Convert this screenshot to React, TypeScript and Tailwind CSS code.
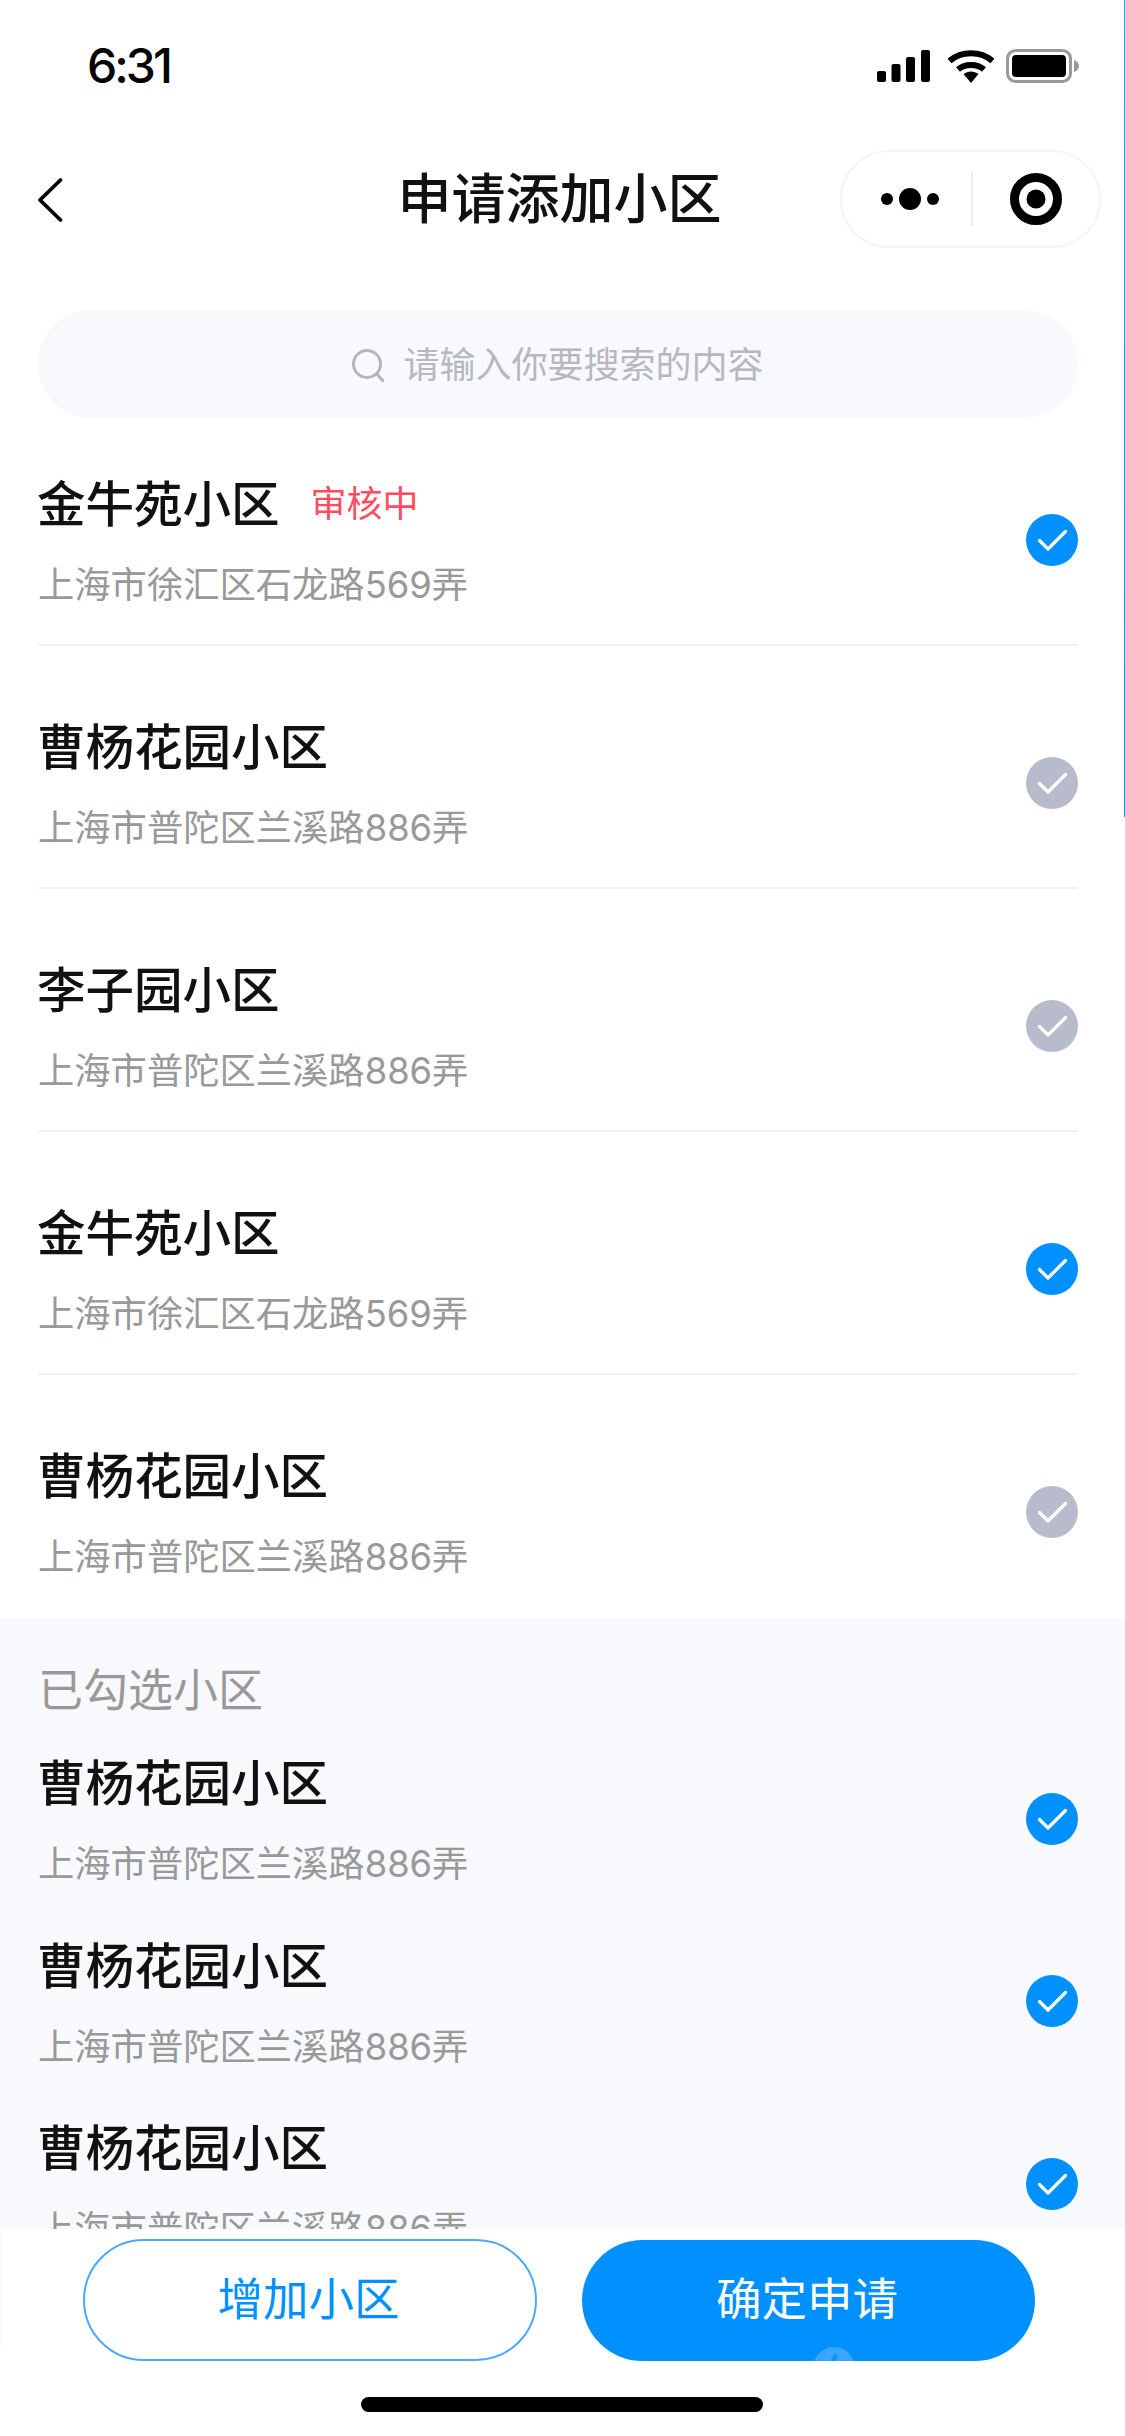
import React from "react";

const FONT = 'font-["Inter","Noto_Sans_CJK_SC",sans-serif]';

type Item = { name: string; addr: string; on: boolean; tag?: string };

const listItems: Item[] = [
  { name: "金牛苑小区", addr: "上海市徐汇区石龙路569弄", on: true, tag: "审核中" },
  { name: "曹杨花园小区", addr: "上海市普陀区兰溪路886弄", on: false },
  { name: "李子园小区", addr: "上海市普陀区兰溪路886弄", on: false },
  { name: "金牛苑小区", addr: "上海市徐汇区石龙路569弄", on: true },
  { name: "曹杨花园小区", addr: "上海市普陀区兰溪路886弄", on: false },
];

const selected: Item[] = [
  { name: "曹杨花园小区", addr: "上海市普陀区兰溪路886弄", on: true },
  { name: "曹杨花园小区", addr: "上海市普陀区兰溪路886弄", on: true },
  { name: "曹杨花园小区", addr: "上海市普陀区兰溪路886弄", on: true },
];

function Check({ on }: { on: boolean }) {
  return (
    <svg width="52" height="52" viewBox="0 0 52 52" className="shrink-0 -translate-y-[2px]">
      <circle cx="26" cy="26" r="26" fill={on ? "#0091ff" : "#b7bbcb"} />
      <path d="M13.5 26.5 L22 35 L39.5 17.5" fill="none" stroke="#fff" strokeWidth="3.2" strokeLinecap="round" strokeLinejoin="round" />
    </svg>
  );
}

function ItemBody({ item }: { item: Item }) {
  return (
    <div className="flex items-center justify-between">
      <div className="flex flex-col gap-[23px]">
        <div className="flex items-center gap-[31px]">
          <span className="-ml-[1px] text-[48.5px] leading-[64px] font-medium text-[#111111]">{item.name}</span>
          {item.tag && <span className="text-[36px] leading-[50px] text-[#ff4d5e] -translate-y-[1px]">{item.tag}</span>}
        </div>
        <span className="text-[36.3px] leading-[50px] text-[#999999]">{item.addr}</span>
      </div>
      <Check on={item.on} />
    </div>
  );
}

function StatusIcons() {
  return (
    <div className="flex items-center gap-[18px]">
      <svg width="53" height="32" viewBox="0 0 53 32">
        <rect x="0" y="21" width="9" height="11" rx="2" fill="#000" />
        <rect x="14.5" y="14" width="9" height="18" rx="2" fill="#000" />
        <rect x="29" y="7" width="9" height="25" rx="2" fill="#000" />
        <rect x="44" y="0" width="9" height="32" rx="2" fill="#000" />
      </svg>
      <svg width="46" height="33" viewBox="0 0 46 33">
        <path d="M1.5 11 C13 0.5 33 0.5 44.5 11" fill="none" stroke="#000" strokeWidth="6" />
        <path d="M10 19.5 C17 13.5 29 13.5 36 19.5" fill="none" stroke="#000" strokeWidth="6" />
        <path d="M15.5 24 C20 20.5 26 20.5 30.5 24 L23 33 Z" fill="#000" />
      </svg>
      <svg width="73" height="34" viewBox="0 0 73 34" className="-ml-[6px]">
        <rect x="1.5" y="1.5" width="63" height="31" rx="8" fill="none" stroke="#9a9a9a" strokeWidth="3" />
        <rect x="6" y="6" width="54" height="22" rx="4" fill="#000" />
        <path d="M68 11 C71 12 73 14 73 17 C73 20 71 22 68 23 Z" fill="#9a9a9a" />
      </svg>
    </div>
  );
}

function Capsule() {
  return (
    <div className="flex h-[98px] w-[261px] items-center rounded-full border-2 border-[#f5f5f5] bg-white">
      <div className="flex w-[129px] justify-center pl-[6px]">
        <svg width="58" height="24" viewBox="0 0 58 24">
          <circle cx="6" cy="12" r="6" fill="#000" />
          <circle cx="29" cy="12" r="11" fill="#000" />
          <circle cx="52" cy="12" r="6" fill="#000" />
        </svg>
      </div>
      <div className="h-[55px] w-[2px] bg-[#ececec]" />
      <div className="flex flex-1 justify-center">
        <svg width="52" height="52" viewBox="0 0 52 52">
          <circle cx="26" cy="26" r="21.5" fill="none" stroke="#000" strokeWidth="9" />
          <circle cx="26" cy="26" r="9.5" fill="#000" />
        </svg>
      </div>
    </div>
  );
}

export default function App() {
  return (
    <div className={`relative flex h-[2436px] w-[1125px] flex-col overflow-hidden bg-white ${FONT}`}>
      <div className="absolute right-0 top-0 h-[817px] w-px bg-gradient-to-b from-[#4f97e6] to-[#3a80d6]" />

      <div className="flex h-[132px] shrink-0 items-center justify-between pl-[87px] pr-[46px]">
        <span className="text-[48px] font-medium tracking-[-3px] text-black">6:31</span>
        <StatusIcons />
      </div>

      <div className="grid h-[136px] shrink-0 grid-cols-[1fr_auto_1fr] items-center pr-[6px]">
        <svg width="28" height="46" viewBox="0 0 28 46" className="ml-[36px]">
          <path d="M24.5 3 L4 23 L24.5 43" fill="none" stroke="#000" strokeWidth="3.8" strokeLinecap="round" strokeLinejoin="round" />
        </svg>
        <span className="text-[54px] font-medium leading-[72px] text-[#111111]">申请添加小区</span>
        <div className="-mt-[3px] mr-[18px] flex justify-end">
          <Capsule />
        </div>
      </div>

      <div className="ml-[38px] mr-[47px] mt-[42px] flex h-[108px] shrink-0 items-center justify-center gap-[19px] rounded-full bg-[#f8f9fd] pt-[2px]">
        <svg width="32" height="33" viewBox="0 0 32 33">
          <circle cx="15" cy="15" r="13.5" fill="none" stroke="#b4b6bc" strokeWidth="3" />
          <path d="M25 25 L31 32" stroke="#b4b6bc" strokeWidth="3" strokeLinecap="round" />
        </svg>
        <span className="text-[36px] leading-[50px] text-[#b6b8be]">请输入你要搜索的内容</span>
      </div>

      <main className="min-h-0 flex-1 overflow-hidden">
        <div className="ml-[38px] mr-[47px]">
          {listItems.map((item, i) => (
            <div
              key={i}
              className={`${i === 0 ? "h-[228px] pt-[55px]" : "h-[243px] pt-[70px]"} ${i < listItems.length - 1 ? "border-b-2 border-[#f1f1f1]" : ""}`}
            >
              <ItemBody item={item} />
            </div>
          ))}
        </div>
        <section className="bg-[#f8f9fd] pb-[40px] pl-[38px] pr-[47px] pt-[43px]">
          <div className="mb-[31px] text-[45px] leading-[60px] text-[#999999]">已勾选小区</div>
          <div className="flex flex-col gap-[45.5px]">
            {selected.map((item, i) => (
              <ItemBody key={i} item={item} />
            ))}
          </div>
        </section>
      </main>

      <footer className="h-[207px] shrink-0 bg-white">
        <div className="flex h-[119px] items-start gap-[45px] border-l border-[#f7f8fc] pl-[82px] pt-[10px]">
          <button className="flex h-[122px] w-[454px] items-center justify-center rounded-full border-2 border-[#4aa9ff] bg-white pr-[3px] text-[45.5px] text-[#0091ff]">
            增加小区
          </button>
          <button className="relative mt-[1px] flex h-[121px] w-[453px] items-center justify-center overflow-hidden rounded-full bg-[#0091ff] pr-[3px] text-[45.5px] text-white">
            确定申请
            <span className="absolute left-[231px] top-[107px] h-[42px] w-[42px] rounded-full bg-[#39a7ff]" />
            <span className="absolute left-[250px] top-[114px] h-[8px] w-[5px] rotate-[30deg] rounded-full bg-[#0f93fb]" />
          </button>
        </div>
        <div className="mt-[49px] flex justify-center pr-[1px]">
          <div className="h-[15px] w-[402px] rounded-full bg-black" />
        </div>
      </footer>
    </div>
  );
}
